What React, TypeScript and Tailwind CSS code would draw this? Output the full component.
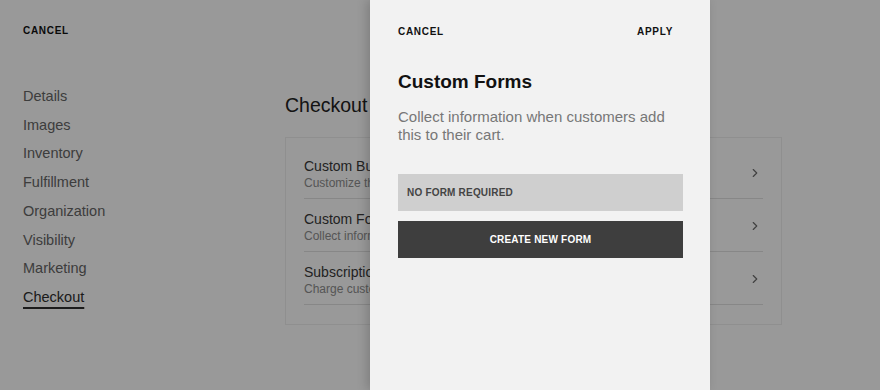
import { ChevronRight } from "lucide-react";

const NAV = [
  "Details",
  "Images",
  "Inventory",
  "Fulfillment",
  "Organization",
  "Visibility",
  "Marketing",
  "Checkout",
];

const ROWS = [
  { title: "Custom Buttons", desc: "Customize the add to cart button." },
  { title: "Custom Forms", desc: "Collect information from customers." },
  { title: "Subscription", desc: "Charge customers on a recurring basis." },
];

function ProductPage() {
  return (
    <div className="flex h-full w-full bg-white">
      {/* left side nav */}
      <div className="w-[285px] shrink-0 pl-[23px] pt-[23px]">
        <div className="text-[10px] leading-4 font-bold tracking-[0.07em] text-[#111]">CANCEL</div>
        <nav className="mt-[43px] flex flex-col">
          {NAV.map((item) => (
            <div key={item} className="leading-[28.7px]">
              <span
                className={
                  item === "Checkout"
                    ? "text-[14.5px] text-[#2e2e2e] underline decoration-2 underline-offset-[5px]"
                    : "text-[14.5px] text-[#666]"
                }
              >
                {item}
              </span>
            </div>
          ))}
        </nav>
      </div>

      {/* main */}
      <div className="pt-[93px]">
        <h1 className="text-[19.5px] leading-6 text-[#222]">Checkout</h1>
        <div className="mt-5 w-[497px] border border-[#eeeeee] px-[18px] pt-[8px] pb-[19px]">
          {ROWS.map((row) => (
            <div
              key={row.title}
              className="flex items-center justify-between border-b border-[#e2e2e2] pt-[10px] pb-[8px]"
            >
              <div>
                <div className="text-[14px] leading-5 text-[#393939]">{row.title}</div>
                <div className="text-[12px] leading-[14px] text-[#8e8e8e]">{row.desc}</div>
              </div>
              <ChevronRight className="mr-[1px] h-[14px] w-[14px] text-[#6e6e6e]" strokeWidth={2} />
            </div>
          ))}
        </div>
      </div>
    </div>
  );
}

function CustomFormsPanel() {
  return (
    <div className="absolute top-0 bottom-0 left-[370px] w-[340px] bg-[#f2f2f2] pl-[28px] pr-[27px] pt-[24px] shadow-[-3px_0_10px_rgba(0,0,0,0.18)]">
      <div className="flex items-center justify-between text-[10px] leading-4 font-bold tracking-[0.07em] text-[#111]">
        <span>CANCEL</span>
        <span className="mr-[10px]">APPLY</span>
      </div>
      <h2 className="mt-[30px] text-[19px] leading-6 font-bold text-[#111]">Custom Forms</h2>
      <p className="mt-[14px] text-[15px] leading-[18px] text-[#777]">
        Collect information when customers add this to their cart.
      </p>
      <div className="mt-[30px] flex h-[37px] items-center bg-[#cfcfcf] px-[9px] text-[10px] font-bold tracking-[0.02em] text-[#444]">
        NO FORM REQUIRED
      </div>
      <button className="mt-[10px] flex h-[37px] w-full items-center justify-center bg-[#3e3e3e] text-[10px] font-bold tracking-[0.02em] text-white">
        CREATE NEW FORM
      </button>
    </div>
  );
}

export default function App() {
  return (
    <div
      className="relative h-[390px] w-full overflow-hidden"
      style={{ fontFamily: '"Liberation Sans", Arial, sans-serif' }}
    >
      <ProductPage />
      <div className="absolute inset-0 bg-black/40" />
      <CustomFormsPanel />
    </div>
  );
}
